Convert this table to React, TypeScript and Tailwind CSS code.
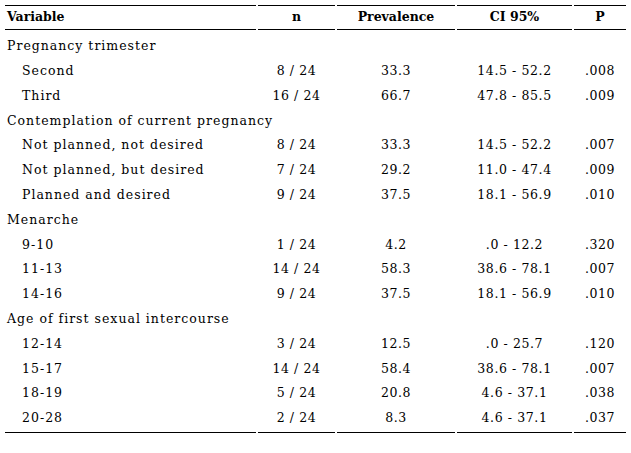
import React from "react";

type Row = { label: string; indent?: boolean; n?: string; p?: string; ci?: string; pv?: string };

const rows: Row[] = [
  { label: "Pregnancy trimester" },
  { label: "Second", indent: true, n: "8 / 24", p: "33.3", ci: "14.5 - 52.2", pv: ".008" },
  { label: "Third", indent: true, n: "16 / 24", p: "66.7", ci: "47.8 - 85.5", pv: ".009" },
  { label: "Contemplation of current pregnancy" },
  { label: "Not planned, not desired", indent: true, n: "8 / 24", p: "33.3", ci: "14.5 - 52.2", pv: ".007" },
  { label: "Not planned, but desired", indent: true, n: "7 / 24", p: "29.2", ci: "11.0 - 47.4", pv: ".009" },
  { label: "Planned and desired", indent: true, n: "9 / 24", p: "37.5", ci: "18.1 - 56.9", pv: ".010" },
  { label: "Menarche" },
  { label: "9-10", indent: true, n: "1 / 24", p: "4.2", ci: ".0 - 12.2", pv: ".320" },
  { label: "11-13", indent: true, n: "14 / 24", p: "58.3", ci: "38.6 - 78.1", pv: ".007" },
  { label: "14-16", indent: true, n: "9 / 24", p: "37.5", ci: "18.1 - 56.9", pv: ".010" },
  { label: "Age of first sexual intercourse" },
  { label: "12-14", indent: true, n: "3 / 24", p: "12.5", ci: ".0 - 25.7", pv: ".120" },
  { label: "15-17", indent: true, n: "14 / 24", p: "58.4", ci: "38.6 - 78.1", pv: ".007" },
  { label: "18-19", indent: true, n: "5 / 24", p: "20.8", ci: "4.6 - 37.1", pv: ".038" },
  { label: "20-28", indent: true, n: "2 / 24", p: "8.3", ci: "4.6 - 37.1", pv: ".037" },
];

export default function App() {
  return (
    <div className="w-[631px] h-[453px] bg-white text-black overflow-hidden" style={{ fontFamily: '"DejaVu Serif", serif' }}>
      <table className="ml-[3px] mt-[3px] table-fixed w-[625px] border-separate border-spacing-[2px] text-[12.5px] leading-none">
        <colgroup>
          <col className="w-[251px]" />
          <col className="w-[77px]" />
          <col className="w-[118px]" />
          <col className="w-[115px]" />
          <col className="w-[52px]" />
        </colgroup>
        <thead>
          <tr className="h-[25px] font-bold">
            <th className="border-y border-black text-left pl-[2px] p-0 font-bold">Variable</th>
            <th className="border-y border-black text-center p-0 font-bold">n</th>
            <th className="border-y border-black text-center p-0 font-bold">Prevalence</th>
            <th className="border-y border-black text-center p-0 font-bold">CI 95%</th>
            <th className="border-y border-black text-center p-0 font-bold">P</th>
          </tr>
        </thead>
        <tbody className="font-light">
          {rows.map((r, i) => {
            const last = i === rows.length - 1;
            const first = i === 0;
            const cell = last
              ? "border-b border-black pb-[3px] h-[26px]"
              : first
              ? "pt-[3px] h-[25.8px]"
              : "h-[22.8px]";
            if (!r.n) {
              return (
                <tr key={i}>
                  <td colSpan={5} className={`${cell} text-left whitespace-nowrap pl-[2px] tracking-[1px]`}>{r.label}</td>
                </tr>
              );
            }
            return (
              <tr key={i}>
                <td className={`${cell} text-left whitespace-nowrap pl-[17px] tracking-[1px]`}>{r.label}</td>
                <td className={`${cell} text-center whitespace-nowrap tracking-[0.6px]`}>{r.n}</td>
                <td className={`${cell} text-center whitespace-nowrap tracking-[0.6px]`}>{r.p}</td>
                <td className={`${cell} text-center whitespace-nowrap tracking-[0.6px]`}>{r.ci}</td>
                <td className={`${cell} text-center whitespace-nowrap tracking-[0.6px]`}>{r.pv}</td>
              </tr>
            );
          })}
        </tbody>
      </table>
    </div>
  );
}
